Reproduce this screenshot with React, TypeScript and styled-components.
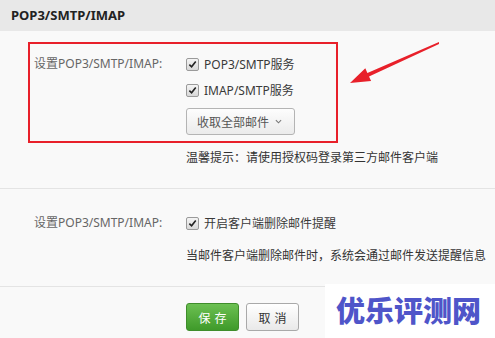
import { createGlobalStyle, styled } from "styled-components";

const GlobalStyle = createGlobalStyle`
  html, body {
    margin: 0;
    padding: 0;
    background: #f9f9f9;
  }

  body {
    font-family: "Noto Sans", "Noto Sans CJK SC", sans-serif;
    font-size: 12px;
    color: #333;
  }
`;

export default function App() {
  return (
    <>
      <GlobalStyle />
      <Page>
        <Header>POP3/SMTP/IMAP</Header>

        <Section $top={20}>
          <Label>设置POP3/SMTP/IMAP:</Label>
          <Field>
            <CheckRow>
              <Checkbox />
              POP3/SMTP服务
            </CheckRow>
            <CheckRow>
              <Checkbox />
              IMAP/SMTP服务
            </CheckRow>
            <Dropdown>
              收取全部邮件
              <Chevron viewBox="0 0 8 5">
                <path d="M1 1 L4 4 L7 1" />
              </Chevron>
            </Dropdown>
            <Tip $gap={13}>温馨提示：请使用授权码登录第三方邮件客户端</Tip>
          </Field>
        </Section>

        <Section $top={21}>
          <Label>设置POP3/SMTP/IMAP:</Label>
          <Field>
            <CheckRow>
              <Checkbox />
              开启客户端删除邮件提醒
            </CheckRow>
            <Tip $gap={10}>当邮件客户端删除邮件时，系统会通过邮件发送提醒信息</Tip>
          </Field>
        </Section>

        <Footer>
          <Button $primary>保存</Button>
          <Button>取消</Button>
        </Footer>

        <Highlight />
        <Arrow viewBox="0 0 495 338">
          <polygon points="439,42 367.4,72.9 365.3,68.3 350,83 371.1,81.1 369,76.5 439,44" />
        </Arrow>
        <Watermark>优乐评测网</Watermark>
      </Page>
    </>
  );
}

function Checkbox() {
  return (
    <Box>
      <svg viewBox="0 0 10 10" width="9" height="9">
        <path d="M1.5 5.2 L4 7.6 L8.6 1.8" fill="none" stroke="#222" strokeWidth="1.8" />
      </svg>
    </Box>
  );
}

const Page = styled.div`
  position: relative;
  width: 495px;
  height: 338px;
  overflow: hidden;
  background: #f9f9f9;
`;

const Header = styled.div`
  height: 31px;
  line-height: 31px;
  padding-left: 11px;

  background: #e8e8e8;

  font-size: 13px;
  font-weight: 700;
  color: #222;
`;

const Section = styled.div<{ $top: number }>`
  display: grid;
  grid-template-columns: 186px 1fr;

  padding: ${(p) => p.$top}px 0 20px;

  border-bottom: 1px solid #e4e4e4;
`;

const Label = styled.div`
  padding-left: 34px;
  line-height: 26px;
  color: #666;
`;

const Field = styled.div`
  display: flex;
  flex-direction: column;
  align-items: flex-start;
`;

const CheckRow = styled.label`
  display: flex;
  align-items: center;
  gap: 5px;

  height: 26px;
  color: #3a3a3a;
`;

const Box = styled.span`
  display: flex;
  align-items: center;
  justify-content: center;

  width: 11px;
  height: 11px;

  border: 1px solid #9a9a9a;
  border-radius: 2px;
  background: linear-gradient(#f4f4f4, #d8d8d8);
`;

const Dropdown = styled.div`
  display: flex;
  align-items: center;
  gap: 6px;

  box-sizing: border-box;
  height: 27px;
  margin-top: 5px;
  padding: 0 12px 0 10px;

  border: 1px solid #b4b4b4;
  border-radius: 3px;
  background: linear-gradient(#fdfdfd, #ebebeb);

  font-family: "Noto Sans CJK SC", sans-serif;
  color: #555;
`;

const Chevron = styled.svg`
  width: 7px;
  height: 5px;
  fill: none;
  stroke: #777;
  stroke-width: 1.2;
`;

const Tip = styled.div<{ $gap: number }>`
  margin-top: ${(p) => p.$gap}px;
  line-height: 20px;
  color: #333;
`;

const Footer = styled.div`
  display: flex;
  gap: 7px;

  padding: 16px 0 0 186px;
`;

const Button = styled.button<{ $primary?: boolean }>`
  box-sizing: border-box;
  width: 53px;
  height: 28px;
  padding: 0 0 0 4px;

  border-radius: 3px;
  border: 1px solid ${(p) => (p.$primary ? "#3f8d2b" : "#a9a9a9")};
  background: ${(p) =>
    p.$primary
      ? "linear-gradient(#6cc052, #3f9a2a)"
      : "linear-gradient(#ffffff, #e9e9e9)"};

  font-family: "Noto Sans CJK SC", sans-serif;
  font-size: 12px;
  letter-spacing: 4px;
  color: ${(p) => (p.$primary ? "#fff" : "#333")};
`;

const Highlight = styled.div`
  position: absolute;
  left: 28px;
  top: 42px;
  width: 306px;
  height: 97px;

  border: 2px solid #e8202a;
`;

const Arrow = styled.svg`
  position: absolute;
  left: 0;
  top: 0;
  width: 495px;
  height: 338px;
  fill: #e8202a;
`;

const Watermark = styled.div`
  position: absolute;
  left: 325px;
  top: 284px;
  right: 0;
  bottom: 0;

  padding: 6px 0 0 11px;
  background: #fff;

  font-family: "Noto Sans CJK SC", sans-serif;
  font-size: 29px;
  font-weight: 900;
  line-height: 38px;
  color: #4f55c9;
`;
